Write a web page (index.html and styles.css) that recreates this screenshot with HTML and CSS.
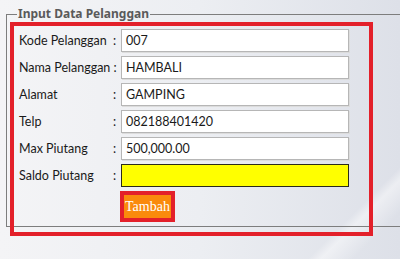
FILE: index.html
```html
<!DOCTYPE html>
<html>
<head>
    <meta charset="UTF-8">
    <title>Input Data Pelanggan</title>
    <link rel="stylesheet" href="styles.css">
</head>
<body>
    <fieldset class="group">
        <legend>Input Data Pelanggan</legend>

        <div class="mark">
            <div class="form">
                <label>Kode Pelanggan</label><span class="colon">:</span>
                <div class="field">007</div>

                <label class="wide">Nama Pelanggan :</label>
                <div class="field">HAMBALI</div>

                <label>Alamat</label><span class="colon">:</span>
                <div class="field">GAMPING</div>

                <label>Telp</label><span class="colon">:</span>
                <div class="field">082188401420</div>

                <label>Max Piutang</label><span class="colon">:</span>
                <div class="field">500,000.00</div>

                <label>Saldo Piutang</label><span class="colon">:</span>
                <div class="field saldo"></div>

                <div class="action">
                    <button class="btn">Tambah</button>
                </div>
            </div>
        </div>
    </fieldset>
</body>
</html>
```

FILE: styles.css
```css
* {
    margin: 0;
    padding: 0;
    box-sizing: border-box;
}

body {
    width: 400px;
    height: 259px;
    overflow: hidden;
    font-family: 'Lato', 'Noto Sans', sans-serif;
    font-size: 12.5px;
    color: #1a1a1a;
    background:
        linear-gradient(135deg, transparent 0 86%, rgba(255,255,255,0.45) 88%, transparent 93%),
        linear-gradient(90deg, #f4f4f6 0%, #eceef2 50%, #dde0e8 100%);
}

.group {
    margin: 6px 0 0 6px;
    width: 394px;
    height: 221px;
    border: 1px solid #7d7d7d;
    border-right: none;
    padding: 0;
}

.group legend {
    margin-left: 10px;
    padding: 0 1px;
    font-family: 'Noto Sans', sans-serif;
    font-weight: bold;
    font-size: 12px;
    color: #5a5a5a;
    line-height: 16px;
}

.mark {
    width: 363px;
    height: 214px;
    margin: 0 0 0 3px;
    border: 4px solid #e3202a;
    padding: 3px 0 0 5px;
}

.form {
    display: grid;
    grid-template-columns: 94px 8px 228px;
    grid-auto-rows: 23px;
    row-gap: 4px;
    align-items: center;
}

.form label {
    white-space: nowrap;
}

.form .wide {
    grid-column: 1 / 3;
}

.field {
    height: 23px;
    line-height: 21px;
    padding-left: 4px;
    background: #fff;
    border: 1px solid #b6b6b6;
    box-shadow: 1px 1px 0 #dcdcdc;
}

.saldo {
    background: #ffff00;
    border: 1px solid #2b2b1a;
    box-shadow: none;
}

.action {
    grid-column: 3;
    height: 31px;
    align-self: start;
}

.btn {
    display: block;
    margin-left: -1px;
    width: 55px;
    height: 31px;
    border: 4px solid #e3202a;
    background: #fa8a0c;
    color: #fff;
    font-family: 'Liberation Serif', serif;
    font-size: 14px;
}
```
